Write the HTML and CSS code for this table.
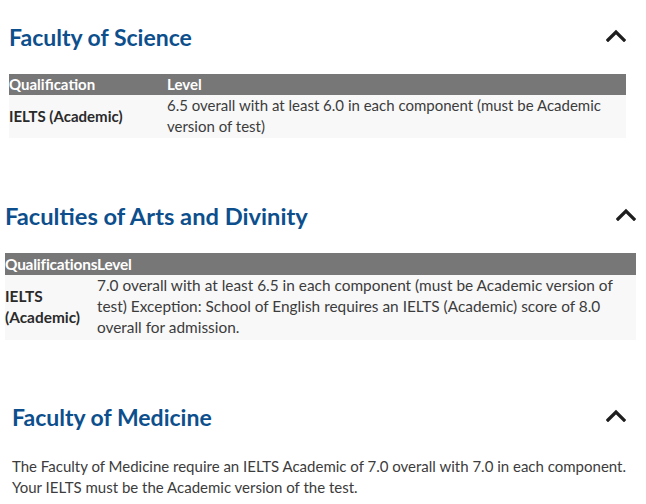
FILE: index.html
```html
<!DOCTYPE html>
<html lang="en">
<head>
<meta charset="utf-8">
<title>IELTS requirements</title>
<link rel="stylesheet" href="styles.css">
</head>
<body>
  <section class="faculty faculty-science">
    <div class="faculty-head">
      <h2 class="faculty-title">Faculty of Science</h2>
      <svg class="chevron" width="20" height="13" viewBox="0 0 20 13" aria-hidden="true"><polyline points="2,11 10,3 18,11" fill="none" stroke="#1e1e1e" stroke-width="3.3" stroke-linecap="square"/></svg>
    </div>
    <table class="req-table">
      <colgroup><col class="col-q1"><col></colgroup>
      <thead><tr><th>Qualification</th><th>Level</th></tr></thead>
      <tbody><tr><td class="qual">IELTS (Academic)</td><td>6.5 overall with at least 6.0 in each component (must be Academic version of test)</td></tr></tbody>
    </table>
  </section>

  <section class="faculty faculty-arts">
    <div class="faculty-head">
      <h2 class="faculty-title">Faculties of Arts and Divinity</h2>
      <svg class="chevron" width="20" height="13" viewBox="0 0 20 13" aria-hidden="true"><polyline points="2,11 10,3 18,11" fill="none" stroke="#1e1e1e" stroke-width="3.3" stroke-linecap="square"/></svg>
    </div>
    <table class="req-table req-table-wide">
      <colgroup><col class="col-q2"><col></colgroup>
      <thead><tr><th>Qualifications</th><th>Level</th></tr></thead>
      <tbody><tr><td class="qual">IELTS (Academic)</td><td>7.0 overall with at least 6.5 in each component (must be Academic version of test) Exception: School of English requires an IELTS (Academic) score of 8.0 overall for admission.</td></tr></tbody>
    </table>
  </section>

  <section class="faculty faculty-medicine">
    <div class="faculty-head">
      <h2 class="faculty-title">Faculty of Medicine</h2>
      <svg class="chevron" width="20" height="13" viewBox="0 0 20 13" aria-hidden="true"><polyline points="2,11 10,3 18,11" fill="none" stroke="#1e1e1e" stroke-width="3.3" stroke-linecap="square"/></svg>
    </div>
    <p class="faculty-text">The Faculty of Medicine require an IELTS Academic of 7.0 overall with 7.0 in each component. Your IELTS must be the Academic version of the test.</p>
  </section>
</body>
</html>
```

FILE: styles.css
```css
html, body {
  margin: 0;
  padding: 0;
  background: #ffffff;
}

body {
  font-family: "Lato", "Liberation Sans", sans-serif;
  font-size: 15px;
  line-height: 21px;
  color: #3c3c3c;
  width: 646px;
  height: 504px;
  overflow: hidden;
}

.faculty {
  display: flex;
  flex-direction: column;
}

.faculty-science {
  padding: 22px 20px 0 9px;
}

.faculty-arts {
  padding: 63px 10px 0 5px;
  font-size: 15.4px;
}

.faculty-medicine {
  padding: 62px 20px 0 12px;
}

.faculty-head {
  display: flex;
  align-items: center;
  justify-content: space-between;
}

.faculty-title {
  margin: 0;
  font-size: 23px;
  line-height: 30px;
  font-weight: 700;
  color: #0d4f8d;
}

.faculty-arts .faculty-title {
  font-size: 23.7px;
}

.chevron {
  display: block;
  margin-bottom: 3px;
}

.req-table {
  width: 100%;
  border-collapse: collapse;
  table-layout: fixed;
  margin-top: 22px;
}

.col-q1 { width: 158px; }
.col-q2 { width: 92px; }

.req-table th {
  background: #777777;
  color: #ffffff;
  font-weight: 700;
  text-align: left;
  padding: 0;
  height: 21px;
  line-height: 21px;
  white-space: nowrap;
}

.req-table-wide th {
  height: 22px;
  line-height: 22px;
  letter-spacing: -0.2px;
}

.req-table td {
  background: #f8f8f9;
  padding: 0 12px 1px 0;
  vertical-align: top;
}

.req-table-wide td {
  padding-bottom: 2px;
}

.req-table td.qual {
  font-weight: 700;
  vertical-align: middle;
  color: #2a2a2a;
}

.faculty-text {
  margin: 24px 0 0;
}
```
